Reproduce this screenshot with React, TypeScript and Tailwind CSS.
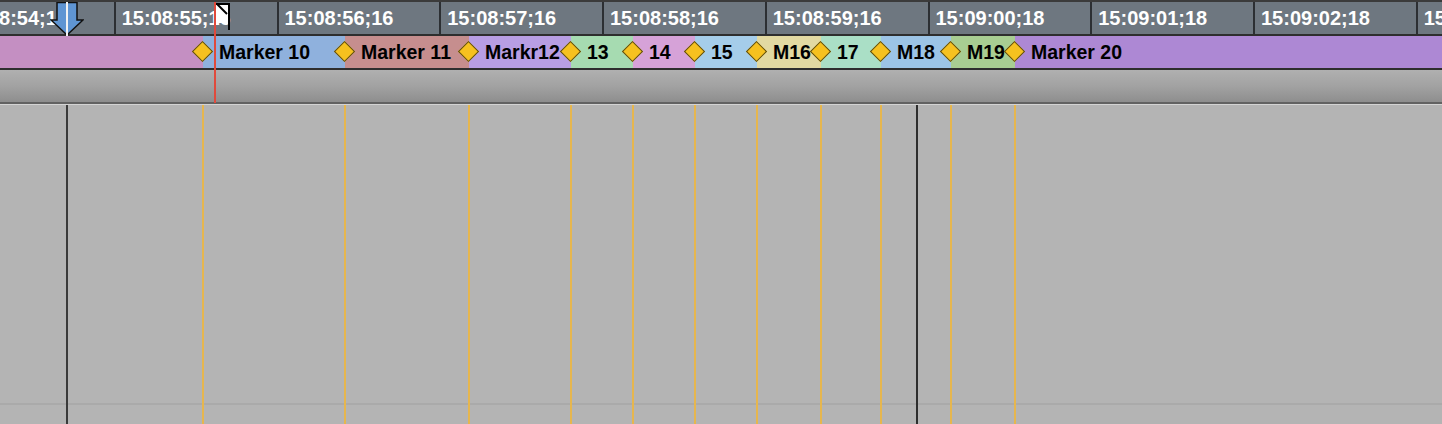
import React from "react";

const ticks = [
  "15:08:54;16",
  "15:08:55;16",
  "15:08:56;16",
  "15:08:57;16",
  "15:08:58;16",
  "15:08:59;16",
  "15:09:00;18",
  "15:09:01;18",
  "15:09:02;18",
  "15:09:03;18",
];

// marker segments on the lane: width in px, colour, label
const markers = [
  { w: "w-[142px]", bg: "bg-[#8fb1dd]", label: "Marker 10" },
  { w: "w-[124px]", bg: "bg-[#c68e8e]", label: "Marker 11" },
  { w: "w-[102px]", bg: "bg-[#b89ee3]", label: "Markr12" },
  { w: "w-[62px]", bg: "bg-[#a6dbb1]", label: "13" },
  { w: "w-[62px]", bg: "bg-[#d6a2d8]", label: "14" },
  { w: "w-[62px]", bg: "bg-[#a5cdea]", label: "15" },
  { w: "w-[64px]", bg: "bg-[#e2d9a2]", label: "M16" },
  { w: "w-[60px]", bg: "bg-[#aadfc6]", label: "17" },
  { w: "w-[70px]", bg: "bg-[#9cc4e6]", label: "M18" },
  { w: "w-[64px]", bg: "bg-[#a8cd92]", label: "M19" },
  { w: "flex-1", bg: "bg-[#ad88d4]", label: "Marker 20" },
];

const markerLines = [203, 345, 469, 571, 633, 695, 757, 821, 881, 951, 1015];

function Diamond() {
  return (
    <div className="absolute left-[-8px] top-[8px] w-[15px] h-[15px] rotate-45 bg-[#f6c11f] border border-[#5a4a10] z-10" />
  );
}

function PositionArrow() {
  return (
    <svg className="absolute left-[50px] top-[2px] z-20" width="34" height="34" viewBox="0 0 34 34">
      <path d="M7 0.5 H27 V18 H33 L17 33 L1 18 H7 Z" fill="#5f95d3" stroke="#111" strokeWidth="1.5" />
      <rect x="16" y="0" width="2" height="34" fill="#f2f2f2" />
    </svg>
  );
}

function PlayheadFlag() {
  return (
    <svg className="absolute left-[216px] top-[3px] z-20" width="15" height="28" viewBox="0 0 15 28">
      <rect x="0" y="0" width="13" height="20" fill="#ffffff" />
      <rect x="0" y="0" width="13" height="2" fill="#000" />
      <rect x="12" y="0" width="2" height="27" fill="#000" />
      <path d="M1 1 L11 11" stroke="#000" strokeWidth="2" />
    </svg>
  );
}

export default function App() {
  return (
    <div className="relative w-[1442px] h-[424px] overflow-hidden flex flex-col bg-[#b4b4b4] font-['Liberation_Sans',Arial,sans-serif]">
      <div className="h-[2px] bg-[#3b3b3b] shrink-0" />

      {/* timecode ruler */}
      <div className="h-[32px] shrink-0 bg-[#6e7780] overflow-hidden">
        <div className="flex ml-[-47px]">
          {ticks.map((t) => (
            <div
              key={t}
              className="w-[162.75px] shrink-0 h-[32px] border-r-2 border-[#2c2f33] pl-[6px] text-white font-bold text-[20px] leading-[32px] whitespace-nowrap overflow-hidden"
            >
              {t}
            </div>
          ))}
        </div>
      </div>
      <div className="h-[2px] bg-[#2e2e2e] shrink-0" />

      {/* marker lane */}
      <div className="h-[32px] shrink-0 flex">
        <div className="w-[203px] shrink-0 bg-[#c48fc2]" />
        {markers.map((m) => (
          <div key={m.label} className={`${m.w} shrink-0 ${m.bg} relative`}>
            <Diamond />
            <span className="pl-[16px] font-bold text-[19.5px] leading-[32px] text-black whitespace-nowrap relative z-0">
              {m.label}
            </span>
          </div>
        ))}
      </div>
      <div className="h-[2px] bg-[#2e2e2e] shrink-0" />

      {/* gray track header */}
      <div className="h-[32px] shrink-0 bg-gradient-to-b from-[#b0b0b0] via-[#a2a2a2] to-[#8e8e8e]" />
      <div className="h-[2px] bg-[#626262] shrink-0" />
      <div className="h-[1px] bg-[#d4d4d4] shrink-0" />

      {/* track body */}
      <div className="relative flex-1">
        <div className="absolute left-0 right-0 top-[298px] h-[2px] bg-[#aaaaaa]" />
        <div className="absolute top-0 bottom-0 left-[66px] w-[2px] bg-[#3a3a3a]" />
        <div className="absolute top-0 bottom-0 left-[916px] w-[2px] bg-[#2e2e2e]" />
        {markerLines.map((x) => (
          <div
            key={x}
            className="absolute top-0 bottom-0 w-[2px] bg-[#e6b64e]"
            style={{ left: x - 1 }}
          />
        ))}
      </div>

      {/* overlays */}
      <PositionArrow />
      <div className="absolute left-[214px] top-[2px] h-[101px] w-[2px] bg-[#e04a3c] z-20" />
      <PlayheadFlag />
    </div>
  );
}
